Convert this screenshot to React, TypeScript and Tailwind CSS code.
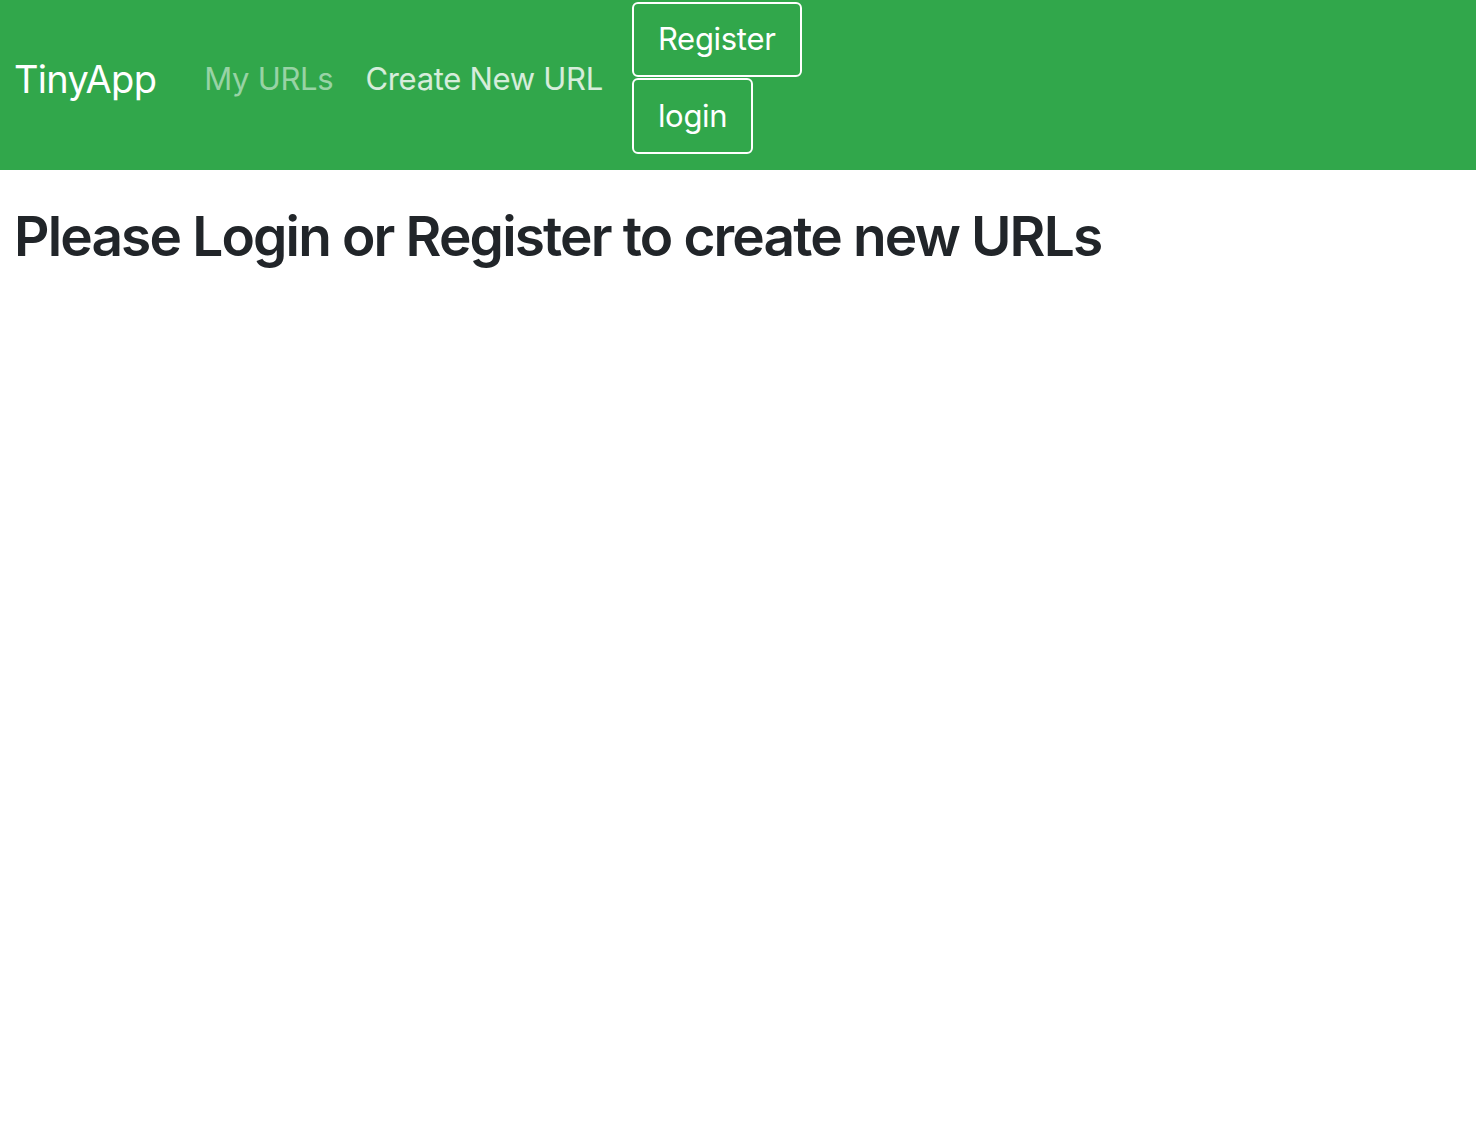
export default function App() {
  return (
    <div className="min-h-screen bg-white font-['Inter','Liberation_Sans',sans-serif]">
      <nav className="flex h-[170px] items-start bg-[#31a74b] pl-[14px]">
        <a className="mt-[56px] text-[38px] leading-[46px] tracking-[-0.7px] text-white" href="#">
          TinyApp
        </a>
        <ul className="ml-[48px] mt-[60px] flex gap-[32px] text-[31px] leading-[38px] tracking-[-0.3px]">
          <li className="text-white/50">My URLs</li>
          <li className="text-white/80">Create New URL</li>
        </ul>
        <div className="ml-[29px] mt-[2px] flex flex-col items-start gap-px">
          <button className="h-[75px] rounded-[6px] border-2 border-white px-[24px] text-[31px] tracking-[-0.3px] text-white">
            Register
          </button>
          <button className="h-[76px] rounded-[6px] border-2 border-white px-[24px] text-[31px] tracking-[-0.3px] text-white">
            login
          </button>
        </div>
      </nav>
      <main className="px-[14px] pt-[26px]">
        <h1 className="text-[55px] font-semibold leading-[80px] tracking-[-1.85px] text-[#212529]">
          Please Login or Register to create new URLs
        </h1>
      </main>
    </div>
  );
}
